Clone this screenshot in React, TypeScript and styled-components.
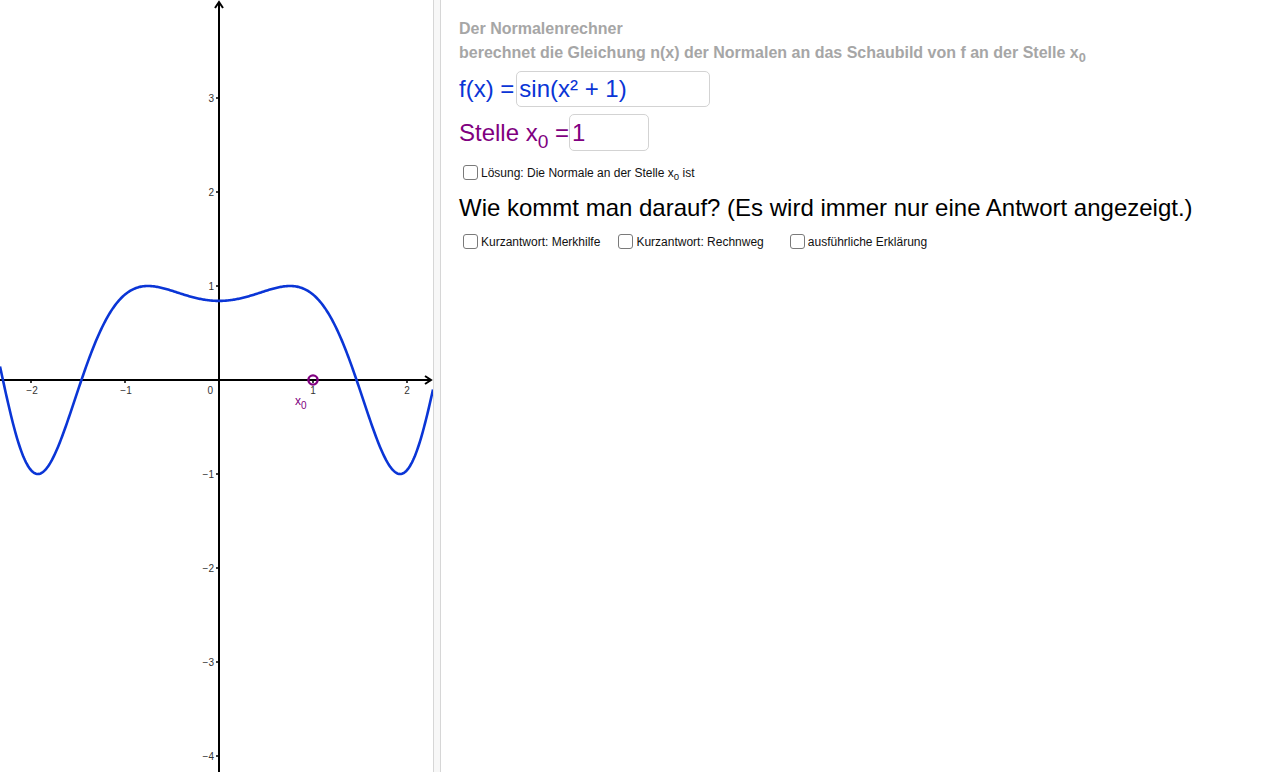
import React from 'react';
import styled, { createGlobalStyle } from 'styled-components';

const GlobalStyle = createGlobalStyle`
  html, body {
    margin: 0;
    padding: 0;
    background: #ffffff;
    font-family: 'Liberation Sans', Arial, sans-serif;
    overflow: hidden;
  }
`;

const BLUE = '#0a35d6';
const PURPLE = '#800080';

const Page = styled.div`
  display: flex;
  width: 1288px;
  height: 772px;
`;

const GraphPanel = styled.div`
  width: 433px;
  height: 772px;
  flex-shrink: 0;
`;

const Divider = styled.div`
  width: 6px;
  height: 772px;
  flex-shrink: 0;
  background: #f7f7f7;
  border-left: 1px solid #d6d6d6;
  border-right: 1px solid #d6d6d6;
`;

const Sidebar = styled.div`
  display: flex;
  flex-direction: column;
  padding: 17px 0 0 18px;
`;

const Heading = styled.div`
  font-size: 16px;
  font-weight: bold;
  color: #a6a6a6;
  line-height: 24px;
  white-space: nowrap;
`;

const Sub = styled.sub`
  font-size: 0.8em;
  vertical-align: -0.35em;
  line-height: 0;
`;

const InputRow = styled.div<{ $top: number; $color: string; $gap: number }>`
  display: flex;
  align-items: center;
  gap: ${(p) => p.$gap}px;
  margin-top: ${(p) => p.$top}px;
  font-size: 24px;
  color: ${(p) => p.$color};
`;

const Label = styled.span`
  white-space: nowrap;
`;

const Field = styled.div<{ $w: number; $h: number; $color: string }>`
  width: ${(p) => p.$w}px;
  height: ${(p) => p.$h}px;
  box-sizing: border-box;
  border: 1px solid #d3d3d3;
  border-radius: 5px;
  padding-left: 2px;
  display: flex;
  align-items: center;
  font-size: 24px;
  color: ${(p) => p.$color};
`;

const CheckRow = styled.div<{ $top: number }>`
  display: flex;
  align-items: center;
  margin-top: ${(p) => p.$top}px;
  padding-left: 4px;
`;

const CheckItem = styled.label<{ $before?: number }>`
  display: flex;
  align-items: center;
  gap: 3px;
  margin-left: ${(p) => p.$before ?? 0}px;
  font-size: 12px;
  color: #111;
  white-space: nowrap;
`;

const Box = styled.span`
  width: 13px;
  height: 13px;
  border: 1px solid #7a7a7a;
  border-radius: 3px;
  background: #fff;
  display: inline-block;
`;

const Question = styled.div`
  font-size: 24px;
  color: #000;
  margin-top: 14px;
  white-space: nowrap;
`;

const OX = 219;
const OY = 380;
const S = 94;

const curvePath = (() => {
  const pts: string[] = [];
  for (let px = 0; px <= 433; px += 1) {
    const x = (px - OX) / S;
    const y = Math.sin(x * x + 1);
    const py = OY - y * S;
    pts.push(`${px === 0 ? 'M' : 'L'}${px},${py.toFixed(2)}`);
  }
  return pts.join(' ');
})();

const Graph = () => {
  const xt = [-2, -1, 1, 2];
  const yt = [3, 2, 1, -1, -2, -3, -4];
  return (
    <svg width="433" height="772" viewBox="0 0 433 772">
      <g stroke="#000" strokeWidth="2" fill="none">
        <line x1={OX} y1={2} x2={OX} y2={772} />
        <line x1={0} y1={OY} x2={431} y2={OY} />
        <polyline points={`${OX - 4},8 ${OX},2 ${OX + 4},8`} strokeLinejoin="miter" />
        <polyline points={`425,${OY - 4} 431,${OY} 425,${OY + 4}`} strokeLinejoin="miter" />
      </g>
      <g stroke="#000" strokeWidth="1.5">
        {xt.map((t) => (
          <line key={t} x1={OX + t * S} y1={OY} x2={OX + t * S} y2={OY + 3} />
        ))}
        {yt.map((t) => (
          <line key={t} x1={OX - 3} y1={OY - t * S} x2={OX} y2={OY - t * S} />
        ))}
      </g>
      <g fontFamily="'Liberation Sans', Arial, sans-serif" fontSize="10" fill="#333">
        {xt.map((t) => (
          <text key={t} x={OX + t * S + (t < 0 ? 1 : 0)} y={OY + 14} textAnchor="middle">
            {t < 0 ? `\u2212${-t}` : t}
          </text>
        ))}
        <text x={OX - 6} y={OY + 14} textAnchor="end">0</text>
        {yt.map((t) => (
          <text key={t} x={OX - 5} y={OY - t * S + 4} textAnchor="end">
            {t < 0 ? `\u2212${-t}` : t}
          </text>
        ))}
      </g>
      <path d={curvePath} stroke={BLUE} strokeWidth="2.6" fill="none" />
      <circle cx={OX + S} cy={OY} r={4.6} stroke={PURPLE} strokeWidth="2.4" fill="none" />
      <text x={295} y={405} fontFamily="'Liberation Sans', Arial, sans-serif" fontSize="12" fill={PURPLE}>
        x<tspan fontSize="10" dy="4">0</tspan>
      </text>
    </svg>
  );
};

export default function App() {
  return (
    <Page>
      <GlobalStyle />
      <GraphPanel>
        <Graph />
      </GraphPanel>
      <Divider />
      <Sidebar>
        <Heading>Der Normalenrechner</Heading>
        <Heading>
          berechnet die Gleichung n(x) der Normalen an das Schaubild von f an der Stelle x<Sub>0</Sub>
        </Heading>
        <InputRow $top={6} $color={BLUE} $gap={2}>
          <Label>f(x) =</Label>
          <Field $w={194} $h={36} $color={BLUE}>sin(x² + 1)</Field>
        </InputRow>
        <InputRow $top={7} $color={PURPLE} $gap={0}>
          <Label>
            Stelle x<Sub>0</Sub> =
          </Label>
          <Field $w={80} $h={37} $color={PURPLE}>1</Field>
        </InputRow>
        <CheckRow $top={14}>
          <CheckItem>
            <Box />
            <span>
              Lösung: Die Normale an der Stelle x<Sub>0</Sub> ist
            </span>
          </CheckItem>
        </CheckRow>
        <Question>Wie kommt man darauf? (Es wird immer nur eine Antwort angezeigt.)</Question>
        <CheckRow $top={12}>
          <CheckItem>
            <Box />
            <span>Kurzantwort: Merkhilfe</span>
          </CheckItem>
          <CheckItem $before={18}>
            <Box />
            <span>Kurzantwort: Rechnweg</span>
          </CheckItem>
          <CheckItem $before={26}>
            <Box />
            <span>ausführliche Erklärung</span>
          </CheckItem>
        </CheckRow>
      </Sidebar>
    </Page>
  );
}
